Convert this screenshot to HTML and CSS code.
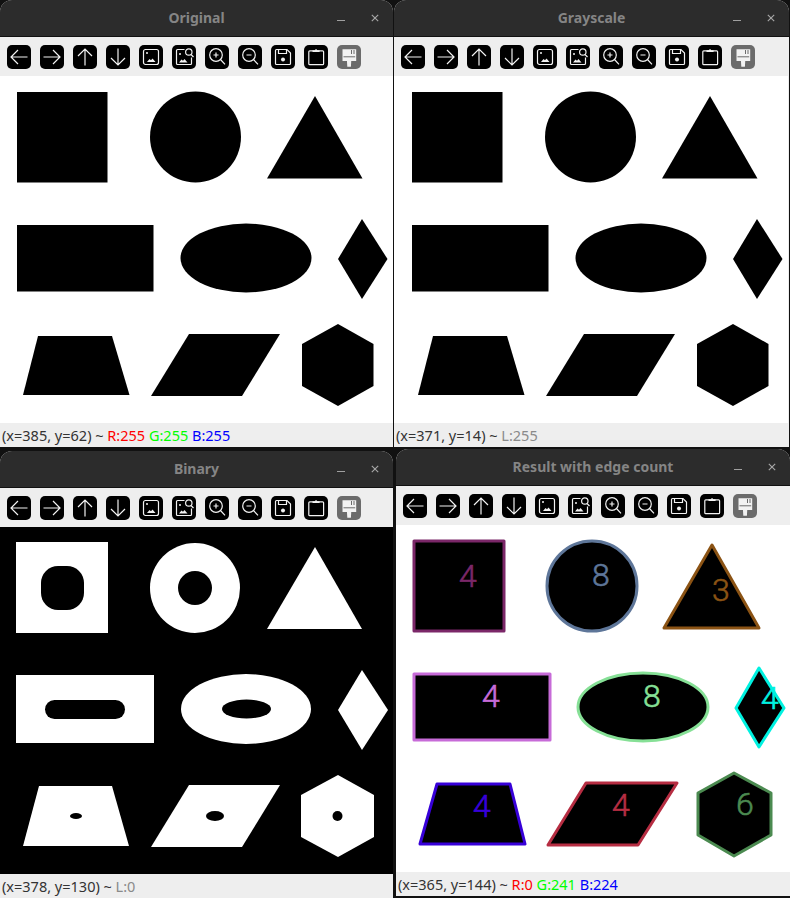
FILE: index.html
```html
<!DOCTYPE html>
<html lang="en">
<head>
<meta charset="UTF-8">
<meta name="viewport" content="width=device-width, initial-scale=1.0">
<title>Shape detection windows</title>
<link rel="stylesheet" href="styles.css">
</head>
<body>

<!-- toolbar icons -->
<svg class="defs" width="0" height="0">
    <symbol id="i-left" viewBox="0 0 24 24"><path d="M20.500 12H4M11 5l-7 7 7 7"/></symbol>
    <symbol id="i-right" viewBox="0 0 24 24"><path d="M3.500 12H20M13 5l7 7-7 7"/></symbol>
    <symbol id="i-up" viewBox="0 0 24 24"><path d="M12 20.500V4M5 11l7-7 7 7"/></symbol>
    <symbol id="i-down" viewBox="0 0 24 24"><path d="M12 3.500V20M5 13l7 7 7-7"/></symbol>
    <symbol id="i-image" viewBox="0 0 24 24">
        <rect x="4.500" y="4.500" width="15" height="15" rx="2"/>
        <circle class="solid" cx="8" cy="8" r="1"/>
        <path class="solid" d="M8 17l2.500-3 1.500 1.200 1.500-1.800 3 3.600z"/>
    </symbol>
    <symbol id="i-image-find" viewBox="0 0 24 24">
        <path d="M12.500 4.500H5.500a1 1 0 0 0-1 1v13a1 1 0 0 0 1 1h13a1 1 0 0 0 1-1v-6"/>
        <circle cx="16.800" cy="7" r="3.200"/>
        <path d="M19 9.500l2.500 2.500"/>
        <path class="solid" d="M7 17.500l2.500-3 1.500 1.200 1.500-1.800 3 3.600z"/>
        <circle class="solid" cx="8" cy="9" r="1"/>
    </symbol>
    <symbol id="i-zoom-in" viewBox="0 0 24 24">
        <circle cx="11" cy="10" r="6.300"/>
        <path d="M15.500 14.500l4.500 4.800M8.500 10h5M11 7.500v5"/>
    </symbol>
    <symbol id="i-zoom-out" viewBox="0 0 24 24">
        <circle cx="11" cy="10" r="6.300"/>
        <path d="M15.500 14.500l4.500 4.800M8.500 10h5"/>
    </symbol>
    <symbol id="i-save" viewBox="0 0 24 24">
        <path d="M5.500 4.500h10.500l3.500 3.500v10.500a1 1 0 0 1-1 1h-13a1 1 0 0 1-1-1v-13a1 1 0 0 1 1-1z"/>
        <path d="M7.500 5v3.500h8V5"/>
        <circle class="solid" cx="12" cy="14.500" r="2"/>
    </symbol>
    <symbol id="i-paste" viewBox="0 0 24 24">
        <rect x="4.800" y="5.800" width="14.800" height="13.900" rx="1"/>
        <path class="solid" d="M8.500 7V5.200h2.300a1.300 1.300 0 0 1 2.500 0h2.300V7z"/>
    </symbol>
    <symbol id="i-brush" viewBox="0 0 24 24">
        <path class="solid" d="M5.500 4.300h13.700V16h-5v1l-.3 4.800h-3.600L10 17v-1H5.500z"/>
        <path class="dark" d="M6.500 11.800h11.700M14.500 5v4M17 5v4"/>
    </symbol>
</svg>

<div class="desktop">

    <div class="window win-original">
        <div class="titlebar">
            <span class="title">Original</span>
            <span class="controls"><span class="minimize"></span><svg class="close" viewBox="0 0 10 10"><path d="M1 1l8 8M9 1l-8 8"/></svg></span>
        </div>
        <div class="toolbar">
            <svg class="tool"><use href="#i-left"/></svg>
            <svg class="tool"><use href="#i-right"/></svg>
            <svg class="tool"><use href="#i-up"/></svg>
            <svg class="tool"><use href="#i-down"/></svg>
            <svg class="tool"><use href="#i-image"/></svg>
            <svg class="tool"><use href="#i-image-find"/></svg>
            <svg class="tool"><use href="#i-zoom-in"/></svg>
            <svg class="tool"><use href="#i-zoom-out"/></svg>
            <svg class="tool"><use href="#i-save"/></svg>
            <svg class="tool"><use href="#i-paste"/></svg>
            <svg class="tool tool-off"><use href="#i-brush"/></svg>
        </div>
        <svg class="canvas" viewBox="0 0 394 347">
            <rect x="17" y="16" width="90.500" height="90.500"/>
            <circle cx="195.500" cy="61" r="45.500"/>
            <polygon points="315,20 362.500,102.500 267,102.500"/>
            <rect x="17" y="149" width="136.500" height="66.500"/>
            <ellipse cx="246" cy="182" rx="65.500" ry="34.500"/>
            <polygon points="362,143 387.500,183 362,223 338,183"/>
            <polygon points="38,260 112,260 129.500,319 23,319"/>
            <polygon points="189,258 280,258 242,320 151,320"/>
            <polygon points="338,248 373.500,268 373.500,310 338,330 302,310 302,268"/>
        </svg>
        <div class="status">(x=385, y=62) ~ <span class="red">R:255</span> <span class="green">G:255</span> <span class="blue">B:255</span></div>
    </div>

    <div class="window win-gray">
        <div class="titlebar">
            <span class="title">Grayscale</span>
            <span class="controls"><span class="minimize"></span><svg class="close" viewBox="0 0 10 10"><path d="M1 1l8 8M9 1l-8 8"/></svg></span>
        </div>
        <div class="toolbar">
            <svg class="tool"><use href="#i-left"/></svg>
            <svg class="tool"><use href="#i-right"/></svg>
            <svg class="tool"><use href="#i-up"/></svg>
            <svg class="tool"><use href="#i-down"/></svg>
            <svg class="tool"><use href="#i-image"/></svg>
            <svg class="tool"><use href="#i-image-find"/></svg>
            <svg class="tool"><use href="#i-zoom-in"/></svg>
            <svg class="tool"><use href="#i-zoom-out"/></svg>
            <svg class="tool"><use href="#i-save"/></svg>
            <svg class="tool"><use href="#i-paste"/></svg>
            <svg class="tool tool-off"><use href="#i-brush"/></svg>
        </div>
        <svg class="canvas" viewBox="-1 0 394 347">
            <rect x="17" y="16" width="90.500" height="90.500"/>
            <circle cx="195.500" cy="61" r="45.500"/>
            <polygon points="315,20 362.500,102.500 267,102.500"/>
            <rect x="17" y="149" width="136.500" height="66.500"/>
            <ellipse cx="246" cy="182" rx="65.500" ry="34.500"/>
            <polygon points="362,143 387.500,183 362,223 338,183"/>
            <polygon points="38,260 112,260 129.500,319 23,319"/>
            <polygon points="189,258 280,258 242,320 151,320"/>
            <polygon points="338,248 373.500,268 373.500,310 338,330 302,310 302,268"/>
        </svg>
        <div class="status">(x=371, y=14) ~ <span class="gray">L:255</span></div>
    </div>

    <div class="window win-binary">
        <div class="titlebar">
            <span class="title">Binary</span>
            <span class="controls"><span class="minimize"></span><svg class="close" viewBox="0 0 10 10"><path d="M1 1l8 8M9 1l-8 8"/></svg></span>
        </div>
        <div class="toolbar">
            <svg class="tool"><use href="#i-left"/></svg>
            <svg class="tool"><use href="#i-right"/></svg>
            <svg class="tool"><use href="#i-up"/></svg>
            <svg class="tool"><use href="#i-down"/></svg>
            <svg class="tool"><use href="#i-image"/></svg>
            <svg class="tool"><use href="#i-image-find"/></svg>
            <svg class="tool"><use href="#i-zoom-in"/></svg>
            <svg class="tool"><use href="#i-zoom-out"/></svg>
            <svg class="tool"><use href="#i-save"/></svg>
            <svg class="tool"><use href="#i-paste"/></svg>
            <svg class="tool tool-off"><use href="#i-brush"/></svg>
        </div>
        <svg class="canvas canvas-binary" viewBox="0 0 394 347">
            <rect x="16" y="15" width="92" height="91"/>
            <circle cx="195" cy="61" r="45"/>
            <polygon points="315,20 362,102 267,102"/>
            <rect x="16" y="148" width="138" height="68"/>
            <ellipse cx="246" cy="182" rx="65" ry="35"/>
            <polygon points="362,143 388,183 362,223 338,183"/>
            <polygon points="39,259 112,259 129,319 23,319"/>
            <polygon points="189,258 280,258 242,320 151,320"/>
            <polygon points="338,248 374,268 374,310 338,330 301,310 301,268"/>
            <!-- holes left by the threshold -->
            <rect class="hole" x="41" y="39" width="43" height="44" rx="17"/>
            <circle class="hole" cx="195" cy="61" r="17"/>
            <rect class="hole" x="45" y="173" width="80" height="19" rx="9.500"/>
            <ellipse class="hole" cx="246.500" cy="182" rx="24.500" ry="9.500"/>
            <ellipse class="hole" cx="76" cy="289" rx="6" ry="3"/>
            <ellipse class="hole" cx="215" cy="289" rx="9" ry="5"/>
            <circle class="hole" cx="337.500" cy="289" r="5"/>
        </svg>
        <div class="status">(x=378, y=130) ~ <span class="gray">L:0</span></div>
    </div>

    <div class="window win-result">
        <div class="titlebar">
            <span class="title">Result with edge count</span>
            <span class="controls"><span class="minimize"></span><svg class="close" viewBox="0 0 10 10"><path d="M1 1l8 8M9 1l-8 8"/></svg></span>
        </div>
        <div class="toolbar">
            <svg class="tool"><use href="#i-left"/></svg>
            <svg class="tool"><use href="#i-right"/></svg>
            <svg class="tool"><use href="#i-up"/></svg>
            <svg class="tool"><use href="#i-down"/></svg>
            <svg class="tool"><use href="#i-image"/></svg>
            <svg class="tool"><use href="#i-image-find"/></svg>
            <svg class="tool"><use href="#i-zoom-in"/></svg>
            <svg class="tool"><use href="#i-zoom-out"/></svg>
            <svg class="tool"><use href="#i-save"/></svg>
            <svg class="tool"><use href="#i-paste"/></svg>
            <svg class="tool tool-off"><use href="#i-brush"/></svg>
        </div>
        <svg class="canvas canvas-result" viewBox="0 0 394 347">
            <g class="c-plum"><rect x="18" y="16" width="90" height="90"/><text x="63" y="62">4</text></g>
            <g class="c-slate"><circle cx="196" cy="61" r="45"/><text x="196" y="61">8</text></g>
            <g class="c-brown"><polygon points="316,20 363,103 268,103"/><text x="316" y="76">3</text></g>
            <g class="c-orchid"><rect x="18" y="149" width="136" height="66"/><text x="86" y="182">4</text></g>
            <g class="c-mint"><ellipse cx="247" cy="182" rx="65" ry="34"/><text x="247" y="182">8</text></g>
            <g class="c-cyan"><polygon points="363,143 388,183 363,222 340,183"/><text x="365" y="184">4</text></g>
            <g class="c-indigo"><polygon points="41,259 114,259 129,319 24,319"/><text x="77" y="292">4</text></g>
            <g class="c-crimson"><polygon points="190,258 281,258 242,320 152,320"/><text x="216" y="291">4</text></g>
            <g class="c-green"><polygon points="338,248 375,268 375,310 338,331 302,310 302,268"/><text x="340" y="290">6</text></g>
        </svg>
        <div class="status">(x=365, y=144) ~ <span class="red">R:0</span> <span class="green">G:241</span> <span class="blue">B:224</span></div>
    </div>

</div>

</body>
</html>
```

FILE: styles.css
```css
body {
    margin: 0;
    background-color: #111111;
    font-family: 'Noto Sans', sans-serif;
}
.defs {
    position: absolute;
}
.desktop {
    position: relative;
    width: 790px;
    height: 898px;
    overflow: hidden;
}

/* windows sit freely on the desktop */
.window {
    position: absolute;
    display: flex;
    flex-direction: column;
    height: 447px;
    border-radius: 12px 12px 0 0;
    overflow: hidden;
    background-color: #eeeeee;
}
.win-original {
    left: 0;
    top: 0;
    width: 393px;
}
.win-gray {
    left: 394px;
    top: 0;
    width: 395px;
}
.win-binary {
    left: 0;
    top: 451px;
    width: 393px;
}
.win-result {
    left: 396px;
    top: 449px;
    width: 394px;
}

.titlebar {
    position: relative;
    flex: none;
    box-sizing: border-box;
    height: 37px;
    padding-bottom: 2px;
    border-bottom: 1px solid #111111;
    background-color: #2c2c2c;
    display: flex;
    align-items: center;
    justify-content: center;
}
.title {
    color: #858585;
    font-size: 14px;
    font-weight: 700;
}
.controls {
    position: absolute;
    right: 14px;
    top: 14px;
    display: flex;
    align-items: center;
    gap: 26px;
}
.minimize {
    width: 8px;
    height: 1px;
    margin-top: 5px;
    background-color: #a0a0a0;
}
.close {
    width: 8px;
    height: 8px;
    fill: none;
    stroke: #a8a8a8;
    stroke-width: 1.4;
}

.toolbar {
    flex: none;
    height: 39px;
    padding-left: 7px;
    display: flex;
    align-items: center;
    gap: 9px;
}
.tool {
    width: 24px;
    height: 24px;
    border-radius: 5px;
    background-color: #000000;
    fill: none;
    stroke: #f2f2f2;
    stroke-width: 1.2;
}
.tool-off {
    background-color: #6b6b6b;
}
.solid {
    fill: #f2f2f2;
    stroke: none;
}
.dark {
    stroke: #6b6b6b;
    stroke-width: 1;
}

.canvas {
    display: block;
    flex: none;
    width: 394px;
    height: 347px;
    background-color: #ffffff;
    fill: #000000;
}
.canvas-binary {
    background-color: #000000;
    fill: #ffffff;
}
.canvas-binary .hole {
    fill: #000000;
}
.canvas-result rect,
.canvas-result circle,
.canvas-result ellipse,
.canvas-result polygon {
    fill: #000000;
    stroke: currentColor;
    stroke-width: 3;
    stroke-linejoin: round;
}
.canvas-result text {
    fill: currentColor;
    stroke: currentColor;
    stroke-width: 0.6;
    font-family: Roboto, sans-serif;
    font-size: 32px;
    font-weight: 300;
}
.c-plum { color: #7b2768; }
.c-slate { color: #5e7699; }
.c-brown { color: #8b5314; }
.c-orchid { color: #c76bd8; }
.c-mint { color: #86e096; }
.c-cyan { color: #00f1e0; }
.c-indigo { color: #3700d8; }
.c-crimson { color: #b62d42; }
.c-green { color: #4b8a50; }

.status {
    flex: 1;
    padding-left: 2px;
    color: #333333;
    font-size: 14.5px;
    line-height: 25px;
    white-space: nowrap;
}
.red { color: #ff0000; }
.green { color: #00ff00; }
.blue { color: #0000ff; }
.gray { color: #8a8a8a; }
```
